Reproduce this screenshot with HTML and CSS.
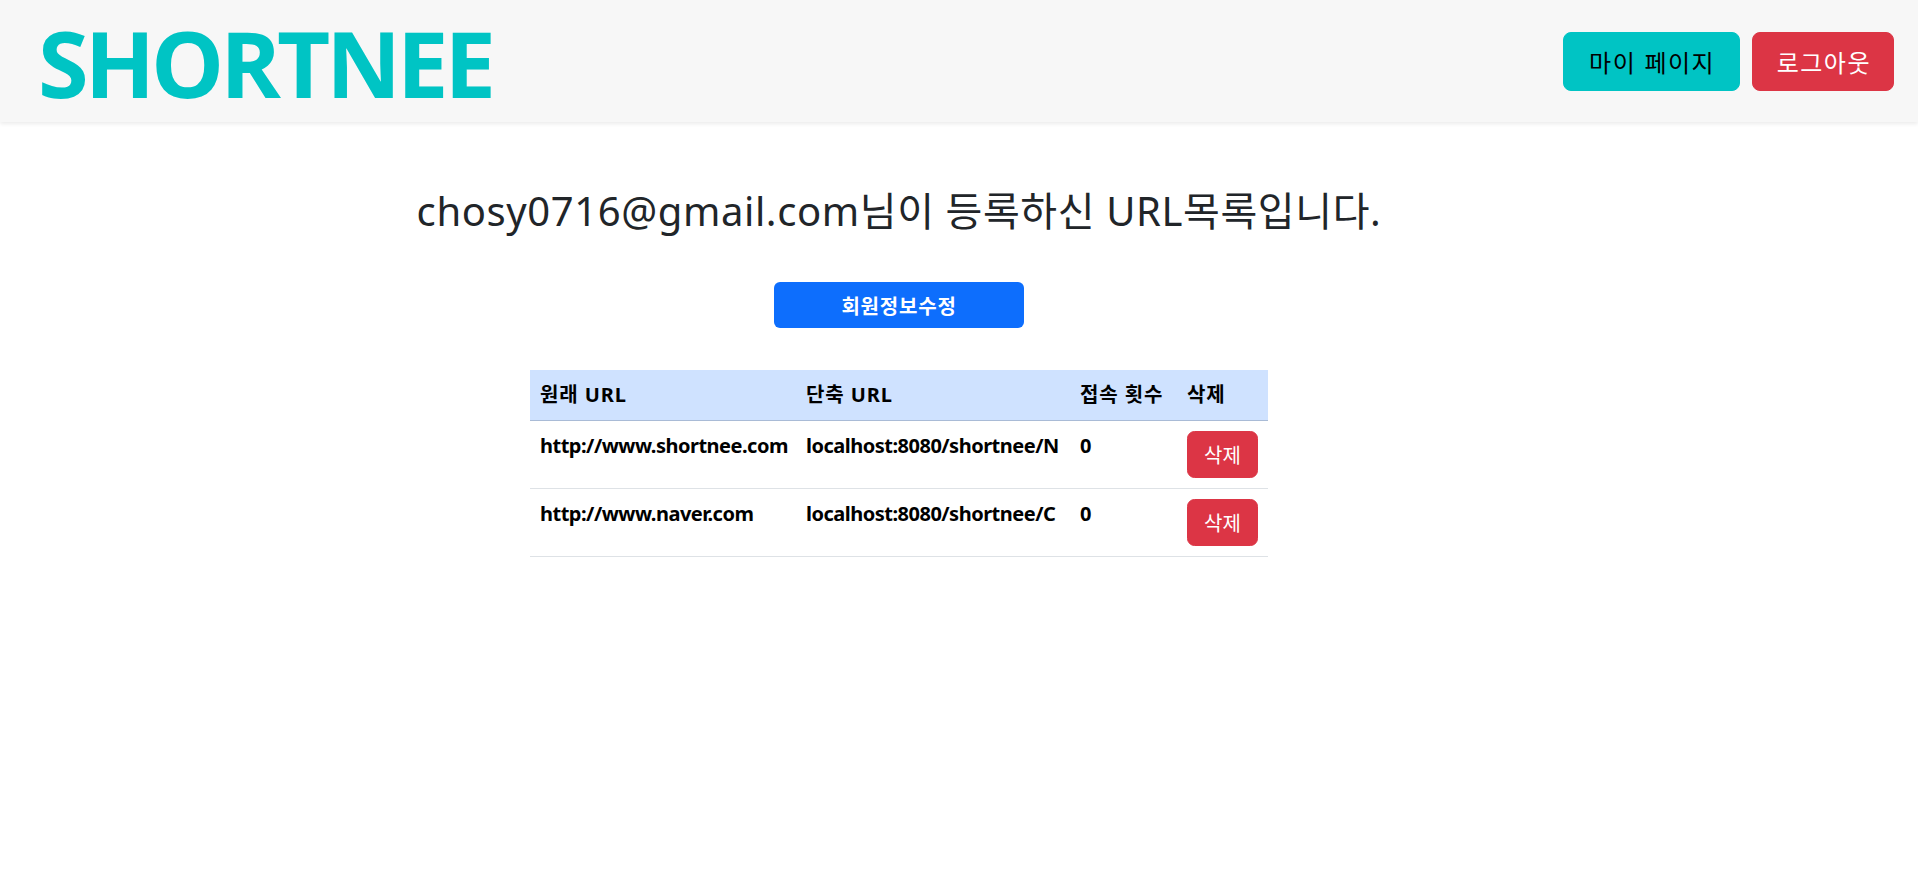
FILE: index.html
```html
<!DOCTYPE html>
<html lang="ko">
<head>
<meta charset="utf-8">
<title>SHORTNEE</title>
<link rel="stylesheet" href="styles.css">
</head>
<body>
<header class="topbar">
  <div class="logo">SHORTNEE</div>
  <nav class="actions">
    <button class="btn-top btn-teal">마이 페이지</button>
    <button class="btn-top btn-red">로그아웃</button>
  </nav>
</header>
<main class="page">
  <h1 class="title">chosy0716@gmail.com님이 등록하신 URL목록입니다.</h1>
  <button class="btn-edit">회원정보수정</button>
  <table class="url-table">
    <colgroup>
      <col class="c1">
      <col class="c2">
      <col class="c3">
      <col class="c4">
    </colgroup>
    <thead>
      <tr>
        <th>원래 URL</th>
        <th>단축 URL</th>
        <th>접속 횟수</th>
        <th>삭제</th>
      </tr>
    </thead>
    <tbody>
      <tr>
        <td>http://www.shortnee.com</td>
        <td>localhost:8080/shortnee/N</td>
        <td>0</td>
        <td><button class="btn-del">삭제</button></td>
      </tr>
      <tr>
        <td>http://www.naver.com</td>
        <td>localhost:8080/shortnee/C</td>
        <td>0</td>
        <td><button class="btn-del">삭제</button></td>
      </tr>
    </tbody>
  </table>
</main>
</body>
</html>
```
FILE: styles.css
```css
* { box-sizing: border-box; }
html, body { margin: 0; padding: 0; background: #fff; }
body {
  font-family: "Noto Sans", "Noto Sans CJK KR", sans-serif;
  color: #212529;
}
.topbar {
  height: 122px;
  background: #f7f7f7;
  box-shadow: 0 2px 4px rgba(0, 0, 0, 0.08);
  display: flex;
  align-items: center;
  justify-content: space-between;
  padding: 0 24px 0 38px;
}
.logo {
  font-family: "Open Sans", "Noto Sans", sans-serif;
  font-weight: 700;
  font-size: 92px;
  line-height: 1;
  color: #00c4c4;
  letter-spacing: -4px;
  margin-top: 4px;
}
.actions { display: flex; gap: 12px; }
.btn-top {
  font-family: "Noto Sans CJK KR", sans-serif;
  font-size: 24px;
  line-height: 35px;
  letter-spacing: 1.5px;
  padding: 11px 22px 11px 23.5px;
  border: 1px solid transparent;
  border-radius: 8px;
  cursor: pointer;
}
.btn-teal {
  background: #00c4c4;
  border-color: #00c4c4;
  color: #000;
  padding-left: 25.5px;
  padding-right: 24px;
}
.btn-red { background: #dc3545; border-color: #dc3545; color: #fff; }

.page {
  display: flex;
  flex-direction: column;
  align-items: center;
  padding: 65px 120px 0 0;
}
.title {
  margin: 0;
  font-size: 40px;
  font-weight: 400;
  line-height: 48px;
  letter-spacing: 0.6px;
  color: #212529;
}
.btn-edit {
  margin-top: 47px;
  width: 250px;
  height: 46px;
  background: #0d6efd;
  border: 0;
  border-radius: 6px;
  color: #fff;
  font-family: "Noto Sans CJK KR", sans-serif;
  font-weight: 700;
  font-size: 20px;
  letter-spacing: 0.8px;
}
.url-table {
  margin-top: 42px;
  width: 738px;
  table-layout: fixed;
  border-collapse: collapse;
  font-size: 20px;
  line-height: 30px;
  letter-spacing: -0.5px;
  color: #000;
  font-weight: 700;
}
.url-table th, .url-table td {
  padding: 10px;
  text-align: left;
  vertical-align: top;
  border-bottom: 1px solid #dee2e6;
  white-space: nowrap;
  overflow: visible;
}
.url-table thead th {
  background: #cfe2ff;
  border-bottom-color: #a9bbd6;
  letter-spacing: 0.9px;
}
.c1 { width: 266px; }
.c2 { width: 274px; }
.c3 { width: 107px; }
.c4 { width: 91px; }
.btn-del {
  font-family: "Noto Sans CJK KR", sans-serif;
  font-size: 20px;
  line-height: 30px;
  font-weight: 400;
  letter-spacing: 0;
  padding: 7.5px 16px;
  border: 1px solid #dc3545;
  border-radius: 7.5px;
  background: #dc3545;
  color: #fff;
  display: block;
}
```
